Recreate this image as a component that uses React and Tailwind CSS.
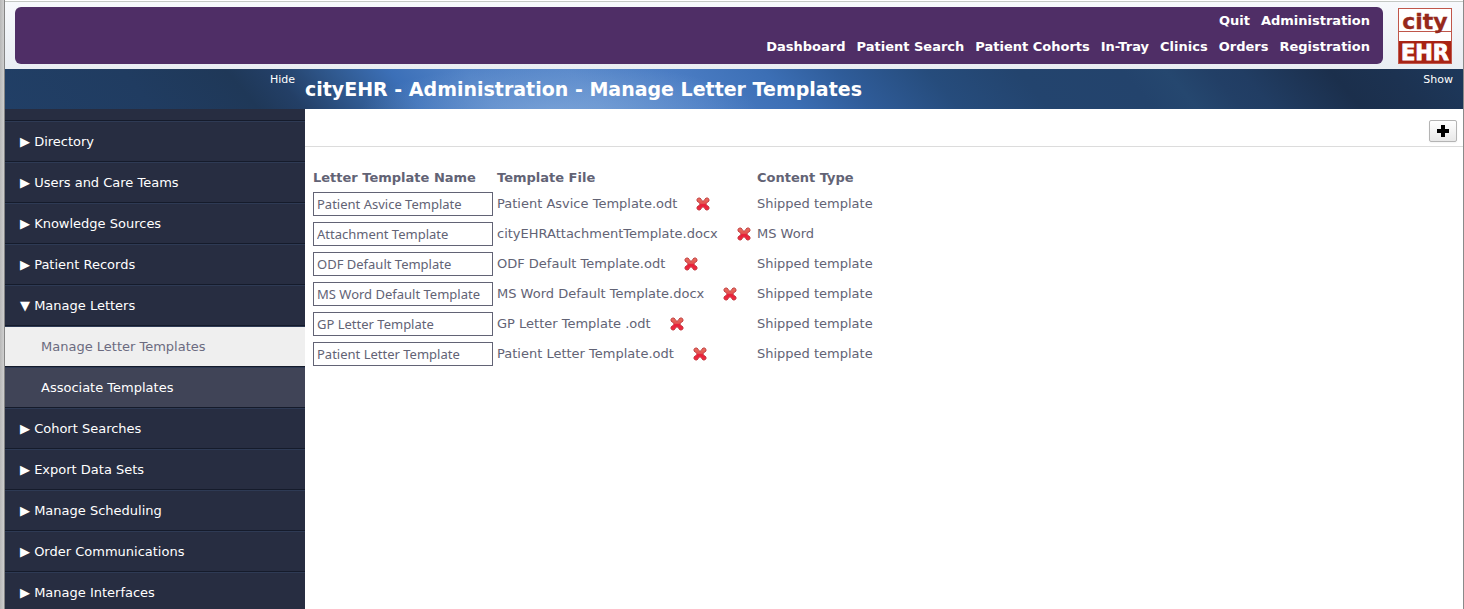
import React, { useState } from "react";

const primaryLinks = ["Quit", "Administration"];
const secondaryLinks = ["Dashboard", "Patient Search", "Patient Cohorts", "In-Tray", "Clinics", "Orders", "Registration"];

const menu = [
  { label: "Directory" },
  { label: "Users and Care Teams" },
  { label: "Knowledge Sources" },
  { label: "Patient Records" },
  { label: "Manage Letters", children: ["Manage Letter Templates", "Associate Templates"] },
  { label: "Cohort Searches" },
  { label: "Export Data Sets" },
  { label: "Manage Scheduling" },
  { label: "Order Communications" },
  { label: "Manage Interfaces" },
];

const initialTemplates = [
  { name: "Patient Asvice Template", file: "Patient Asvice Template.odt", type: "Shipped template" },
  { name: "Attachment Template", file: "cityEHRAttachmentTemplate.docx", type: "MS Word" },
  { name: "ODF Default Template", file: "ODF Default Template.odt", type: "Shipped template" },
  { name: "MS Word Default Template", file: "MS Word Default Template.docx", type: "Shipped template" },
  { name: "GP Letter Template", file: "GP Letter Template .odt", type: "Shipped template" },
  { name: "Patient Letter Template", file: "Patient Letter Template.odt", type: "Shipped template" },
];

function Logo() {
  return (
    <svg viewBox="0 0 54 56" className="mt-1.5 h-14 w-[54px] shrink-0 overflow-visible" role="img" aria-label="cityEHR">
      <rect x="0.5" y="0.5" width="53" height="55" fill="#fff" stroke="#c0564a" />
      <path d="M0 23.5H54" stroke="#c0564a" />
      <rect x="1" y="33" width="52" height="22" fill="#a82314" />
      <g fontFamily="DejaVu Sans" fontWeight="bold">
        <text x="27" y="21" textAnchor="middle" fontSize="22" fill="#96281b" stroke="#96281b" strokeWidth="0.3">city</text>
        <text x="27" y="52" textAnchor="middle" fontSize="21" fill="#fff" stroke="#fff" strokeWidth="0.8">EHR</text>
      </g>
    </svg>
  );
}

function DeleteIcon() {
  return (
    <svg viewBox="0 0 14 14" className="size-3.5">
      <defs>
        <linearGradient id="cross" x1="0" y1="0" x2="0" y2="1">
          <stop offset="0" stopColor="#e8705f" />
          <stop offset="0.45" stopColor="#e45250" />
          <stop offset="0.55" stopColor="#e81f38" />
          <stop offset="1" stopColor="#f02c42" />
        </linearGradient>
      </defs>
      <path
        d="M2.2 1H4L5.2 2.2V2.9L7 4.3L8.8 2.9V2.2L10 1H11.8L13 2.2V4L11.8 5.2H11.2L9.9 7L11.2 8.8H11.8L13 10V11.8L11.8 13H10L8.8 11.8V11.2L7 9.8L5.2 11.2V11.8L4 13H2.2L1 11.8V10L2.2 8.8H2.8L4.1 7L2.8 5.2H2.2L1 4V2.2Z"
        fill="url(#cross)"
        stroke="#bd3f44"
        strokeWidth="0.9"
        strokeLinejoin="round"
      />
    </svg>
  );
}

function NavRow({ items }) {
  return (
    <ul className="flex flex-wrap justify-end gap-x-[11px]">
      {items.map((item) => (
        <li key={item}><a href="#">{item}</a></li>
      ))}
    </ul>
  );
}

function TopBar() {
  return (
    <header className="flex h-[68px] shrink-0 gap-[15px] border-t border-[#c4c8c4] bg-linear-to-b from-[#f7f9fc] to-[#e9edf2] pr-[11px] pl-2.5">
      <nav className="mt-[5px] h-[57px] flex-1 rounded-md bg-[#4f2e66] pt-px pr-[13px] text-[13px] leading-[26px] font-bold text-white">
        <NavRow items={primaryLinks} />
        <NavRow items={secondaryLinks} />
      </nav>
      <Logo />
    </header>
  );
}

function Banner() {
  return (
    <div className="flex h-10 shrink-0 bg-[radial-gradient(ellipse_200px_50px_at_38%_110%,#8bb0dea0,#8bb0de00),linear-gradient(50deg,#213f66_0%,#203c61_10%,#1f3858_17%,#233f66_20%,#30598f_24%,#3c70b8_28%,#5182c6_33%,#5888ca_40%,#4a7cc3_47%,#3c6fb5_53%,#2f5c99_58%,#264c7c_64%,#23446e_70%,#23436c_77%,#25476f_80%,#223f66_83%,#213d63_85%,#1b2f4c_91%,#1c3251_95%,#1d385b_100%)] text-white">
      <div className="flex w-[300px] shrink-0 justify-end pr-2.5">
        <button type="button" className="h-[22px] text-[11px] leading-[22px]">Hide</button>
      </div>
      <h1 className="flex-1 text-[19px] leading-10 font-bold">cityEHR - Administration - Manage Letter Templates</h1>
      <button type="button" className="mr-2.5 h-[22px] text-[11px] leading-[22px]">Show</button>
    </div>
  );
}

function Sidebar() {
  const item = "block w-full border-t border-b border-t-[#2e3a54] border-b-[#151b2b] text-left leading-[39px]";
  return (
    <nav className="w-[300px] shrink-0 overflow-y-auto bg-[#272d41] text-[13px] text-white [scrollbar-width:none]">
      <div className="h-3 border-b border-[#151b2b]" />
      <ul>
        {menu.map(({ label, children }) => (
          <li key={label}>
            <button type="button" aria-expanded={!!children} className={item + " pl-[15px]"}>
              {(children ? "▼ " : "▶ ") + label}
            </button>
            {children && (
              <ul>
                {children.map((child, i) => (
                  <li key={child}>
                    <a href="#" className={item + " pl-9 " + (i === 0 ? "bg-[#efefef] text-[#6b6b80]" : "bg-[#404457]")}>{child}</a>
                  </li>
                ))}
              </ul>
            )}
          </li>
        ))}
      </ul>
    </nav>
  );
}

export default function App() {
  const [templates, setTemplates] = useState(initialTemplates);
  const rename = (index, name) => setTemplates(templates.map((t, i) => (i === index ? { ...t, name } : t)));
  const remove = (index) => setTemplates(templates.filter((_, i) => i !== index));

  return (
    <div className="flex h-screen bg-white font-['DejaVu_Sans',sans-serif]">
      <div className="w-[5px] shrink-0 border-r border-[#858585] bg-linear-to-r from-[#b8b8b8] to-[#cfcfcf]" />
      <div className="flex min-w-0 flex-1 flex-col border-r border-[#8a8a8a] pt-px">
        <TopBar />
        <Banner />
        <div className="flex min-h-0 flex-1">
          <Sidebar />
          <main className="min-w-0 flex-1 text-[13px] text-[#626375]">
            <div className="flex h-[38px] items-end justify-end border-b border-[#dcdcdc] pr-1.5 pb-1">
              <button
                type="button"
                aria-label="Add template"
                className="flex h-[22px] w-7 items-center justify-center rounded-xs border border-[#b4b4b4] bg-linear-to-b from-white to-[#e8e8e8] shadow-xs"
              >
                <svg viewBox="0 0 12 12" className="size-3"><path d="M4 0H8V4H12V8H8V12H4V8H0V4H4Z" fill="#000" /></svg>
              </button>
            </div>
            <table className="mt-[15px] ml-2 w-[628px] table-fixed border-collapse text-left">
              <colgroup>
                <col className="w-[184px]" />
                <col className="w-[260px]" />
                <col className="w-[184px]" />
              </colgroup>
              <thead>
                <tr className="h-[27px]">
                  <th className="pt-1">Letter Template Name</th>
                  <th className="pt-1">Template File</th>
                  <th className="pt-1">Content Type</th>
                </tr>
              </thead>
              <tbody>
                {templates.map((t, i) => (
                  <tr key={t.file} className="h-[30px]">
                    <td>
                      <input
                        type="text"
                        aria-label="Letter template name"
                        value={t.name}
                        onChange={(e) => rename(i, e.target.value)}
                        className="block h-6 w-[180px] border border-[#626375] px-[3px] font-['Noto_Sans',sans-serif]"
                      />
                    </td>
                    <td>
                      <div className="flex items-center gap-[19px] leading-5 whitespace-nowrap">
                        {t.file}
                        <button type="button" aria-label={"Delete " + t.file} onClick={() => remove(i)}><DeleteIcon /></button>
                      </div>
                    </td>
                    <td className="leading-5">{t.type}</td>
                  </tr>
                ))}
              </tbody>
            </table>
          </main>
        </div>
      </div>
    </div>
  );
}
